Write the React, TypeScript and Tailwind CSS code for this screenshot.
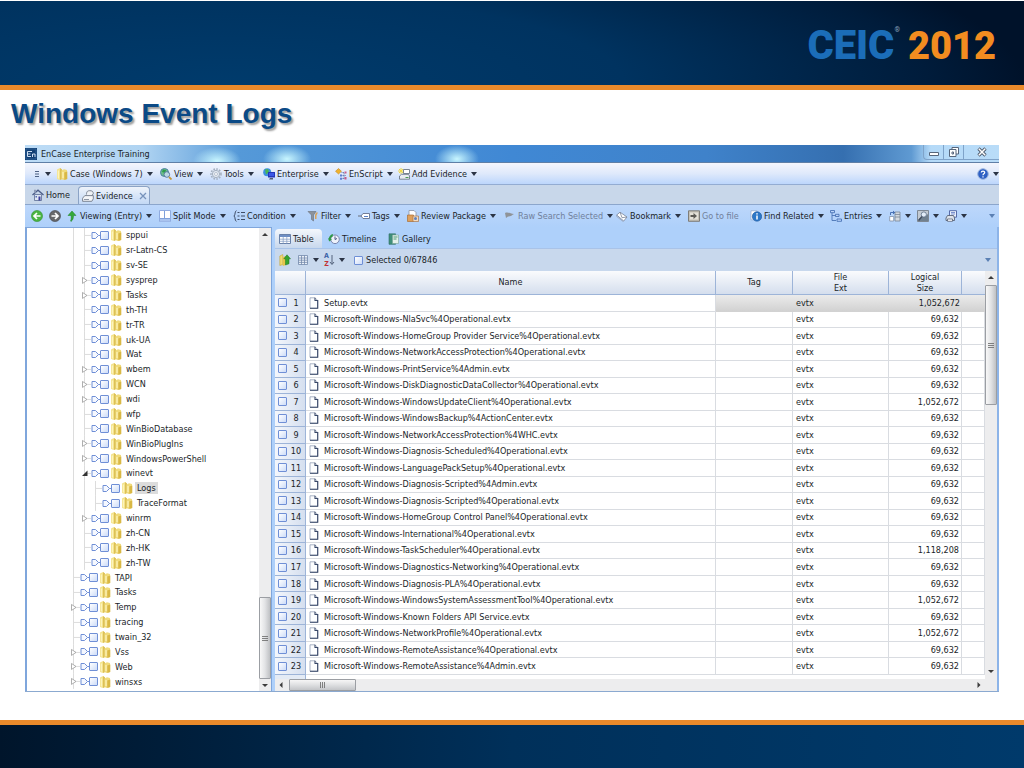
import type { ReactNode } from 'react';

const TREE: { name: string; level: number; mark?: 'closed' | 'open'; selected?: boolean }[] = [
  { name: 'sppui', level: 1 },
  { name: 'sr-Latn-CS', level: 1 },
  { name: 'sv-SE', level: 1 },
  { name: 'sysprep', level: 1, mark: 'closed' },
  { name: 'Tasks', level: 1, mark: 'closed' },
  { name: 'th-TH', level: 1 },
  { name: 'tr-TR', level: 1 },
  { name: 'uk-UA', level: 1 },
  { name: 'Wat', level: 1 },
  { name: 'wbem', level: 1, mark: 'closed' },
  { name: 'WCN', level: 1, mark: 'closed' },
  { name: 'wdi', level: 1, mark: 'closed' },
  { name: 'wfp', level: 1 },
  { name: 'WinBioDatabase', level: 1 },
  { name: 'WinBioPlugIns', level: 1, mark: 'closed' },
  { name: 'WindowsPowerShell', level: 1, mark: 'closed' },
  { name: 'winevt', level: 1, mark: 'open' },
  { name: 'Logs', level: 2, selected: true },
  { name: 'TraceFormat', level: 2 },
  { name: 'winrm', level: 1, mark: 'closed' },
  { name: 'zh-CN', level: 1 },
  { name: 'zh-HK', level: 1 },
  { name: 'zh-TW', level: 1 },
  { name: 'TAPI', level: 0 },
  { name: 'Tasks', level: 0 },
  { name: 'Temp', level: 0, mark: 'closed' },
  { name: 'tracing', level: 0 },
  { name: 'twain_32', level: 0 },
  { name: 'Vss', level: 0, mark: 'closed' },
  { name: 'Web', level: 0, mark: 'closed' },
  { name: 'winsxs', level: 0, mark: 'closed' },
];

const FILES: [string, string][] = [
  ['Setup.evtx', '1,052,672'],
  ['Microsoft-Windows-NlaSvc%4Operational.evtx', '69,632'],
  ['Microsoft-Windows-HomeGroup Provider Service%4Operational.evtx', '69,632'],
  ['Microsoft-Windows-NetworkAccessProtection%4Operational.evtx', '69,632'],
  ['Microsoft-Windows-PrintService%4Admin.evtx', '69,632'],
  ['Microsoft-Windows-DiskDiagnosticDataCollector%4Operational.evtx', '69,632'],
  ['Microsoft-Windows-WindowsUpdateClient%4Operational.evtx', '1,052,672'],
  ['Microsoft-Windows-WindowsBackup%4ActionCenter.evtx', '69,632'],
  ['Microsoft-Windows-NetworkAccessProtection%4WHC.evtx', '69,632'],
  ['Microsoft-Windows-Diagnosis-Scheduled%4Operational.evtx', '69,632'],
  ['Microsoft-Windows-LanguagePackSetup%4Operational.evtx', '69,632'],
  ['Microsoft-Windows-Diagnosis-Scripted%4Admin.evtx', '69,632'],
  ['Microsoft-Windows-Diagnosis-Scripted%4Operational.evtx', '69,632'],
  ['Microsoft-Windows-HomeGroup Control Panel%4Operational.evtx', '69,632'],
  ['Microsoft-Windows-International%4Operational.evtx', '69,632'],
  ['Microsoft-Windows-TaskScheduler%4Operational.evtx', '1,118,208'],
  ['Microsoft-Windows-Diagnostics-Networking%4Operational.evtx', '69,632'],
  ['Microsoft-Windows-Diagnosis-PLA%4Operational.evtx', '69,632'],
  ['Microsoft-Windows-WindowsSystemAssessmentTool%4Operational.evtx', '1,052,672'],
  ['Microsoft-Windows-Known Folders API Service.evtx', '69,632'],
  ['Microsoft-Windows-NetworkProfile%4Operational.evtx', '1,052,672'],
  ['Microsoft-Windows-RemoteAssistance%4Operational.evtx', '69,632'],
  ['Microsoft-Windows-RemoteAssistance%4Admin.evtx', '69,632'],
];

function Icon({ children }: { children: ReactNode }) {
  return (
    <svg viewBox="0 0 12 12" className="h-3 w-3 shrink-0" fill="none" aria-hidden="true">
      {children}
    </svg>
  );
}

const FolderIcon = () => (
  <Icon>
    <path d="M1 1.500 4 0 6 1.500V11L4 12 1 11z" fill="#f4e38c" />
    <path d="M4 0 6 1.500V11L4 12z" fill="#dcc057" />
    <path d="M5.500 2.500 8 1.200 11 2v9L7.500 12 5.500 11z" fill="#f0db7c" />
    <path d="M8.300 4.500 11.300 3.500v7.500l-3 1z" fill="#d9b845" />
    <path d="M2.300 2.500v8M7 4v6" stroke="#fff8c8" />
  </Icon>
);
const GlobeSearch = () => (
  <Icon>
    <circle cx="4.500" cy="4.500" r="4" fill="#6cbf8a" stroke="#4f7fa6" />
    <path d="M3 1.500 6 2 5 5 2 4z" fill="#2f9c4c" />
    <circle cx="6.800" cy="6.500" r="2.800" fill="#cfe4f5" fillOpacity=".8" stroke="#56799c" />
    <path d="m9 9 2.500 2.500" stroke="#c79a3b" strokeWidth="1.800" />
  </Icon>
);
const GearIcon = () => (
  <Icon>
    <circle cx="6" cy="6" r="5" stroke="#a3afbe" strokeWidth="1.600" strokeDasharray="1.6 1.3" />
    <circle cx="6" cy="6" r="3.600" fill="#e3eaf3" stroke="#a3afbe" />
    <circle cx="6" cy="6" r="1.500" fill="#fff" stroke="#a3afbe" strokeWidth=".7" />
  </Icon>
);
const EnterpriseIcon = () => (
  <Icon>
    <circle cx="4.200" cy="4.200" r="4" fill="#3d8fe0" />
    <path d="M2 1.500 5 1l1 3-3 2.500z" fill="#4ab555" />
    <path d="M5 4h7v5.500H5z" fill="#2436b8" />
    <path d="M6 5h5v3H6z" fill="#3b57e6" />
    <path d="M7 10h3v1.500H6z" fill="#525c78" />
  </Icon>
);
const ScriptIcon = () => (
  <Icon>
    <path d="m3.500.5 3 2.800-3 2.700-3-2.700z" fill="#f0b22c" stroke="#b97a16" strokeWidth=".5" />
    <path d="M6.500 4.500h2.500v6M6.500 7.500H11M6.500 10.500H11" stroke="#6d7fae" strokeDasharray="1 .6" />
    <path d="M9.500 3.500h2v2h-2zM9.500 9h2v2.500h-2z" fill="#c65d8a" />
    <path d="M5 6.500h2v2H5zM5 9.800h2v2H5z" fill="#5f7fd0" />
  </Icon>
);
const AddEvidenceIcon = () => (
  <Icon>
    <path d="M3 0v6M0 3h6M1 1l4 4M5 1 1 5" stroke="#f0d844" />
    <path d="M5.500 1.500h6v4h-6z" fill="#fff" stroke="#6c7888" strokeWidth=".9" />
    <path d="m1.500 8 2-1.700h7l1 1.700v3.200h-10z" fill="#e8ecf1" stroke="#6c7888" strokeWidth=".9" />
    <path d="M7.500 9.500h3" stroke="#4a9a52" />
  </Icon>
);
const HomeIcon = () => (
  <Icon>
    <path d="M2.500 5.500h7v6h-7z" fill="#dfe6f3" stroke="#5b6c94" strokeWidth=".8" />
    <path d="M.5 6 6 1.200 11.500 6" stroke="#4c5d88" strokeWidth="1.300" />
    <path d="M2 .8h2v3H2z" fill="#8f9cb8" />
    <path d="M6.500 7.500h2v4h-2z" fill="#3c3f9c" />
    <path d="M3.500 7h1.500v1.500H3.500z" fill="#576fb4" />
  </Icon>
);
const DriveIcon = () => (
  <Icon>
    <path d="M4.500 4.500C4.500 1 6 .7 8 .7s3.300.8 3.300 3L9.500 6" fill="#eef1f5" stroke="#707988" strokeWidth=".9" />
    <path d="m.6 8.200 2.200-2.600h8.500v3.200l-1.500 2.500H.6z" fill="#f3f5f8" stroke="#707988" strokeWidth=".9" />
    <path d="M2 9.500h5" stroke="#8d96a5" />
  </Icon>
);
const BackIcon = () => (
  <Icon>
    <circle cx="6" cy="6" r="5.500" fill="#4cb543" stroke="#2f8f2c" strokeWidth=".6" />
    <path d="M9.500 6H3.500M6 3 3 6l3 3" stroke="#fff" strokeWidth="1.700" />
  </Icon>
);
const ForwardIcon = () => (
  <Icon>
    <circle cx="6" cy="6" r="5.500" fill="#67686b" stroke="#3f4043" strokeWidth=".6" />
    <path d="M2.500 6h6M6 3l3 3-3 3" stroke="#fff" strokeWidth="1.700" />
  </Icon>
);
const UpIcon = () => (
  <Icon>
    <path d="M6 1 10 5.500H7.500C7.500 8 7 10 5 11.500L4.500 11c.8-1.500.8-3.500.6-5.500H2z" fill="#35a93a" stroke="#1d7f25" strokeWidth=".5" />
  </Icon>
);
const SplitIcon = () => (
  <Icon>
    <path d="M.5.5h11v11H.5z" fill="#fff" stroke="#8fabe0" />
    <path d="M5.500 1v7M1 8.500h10" stroke="#7fa0da" />
    <path d="M1 9h10v2.500H1z" fill="#a9c3ee" />
  </Icon>
);
const ConditionIcon = () => (
  <Icon>
    <path d="M3.500.7C1.700.7 2.500 5 1 6c1.500 1 .7 5.300 2.500 5.300" stroke="#3e4c66" />
    <path d="M4.500 2.500h2M4.500 6h2M4.500 9.500h2M8 2.500h4M8 6h4M8 9.500h4" stroke="#3e4c66" strokeWidth="1.200" />
  </Icon>
);
const FilterIcon = () => (
  <Icon>
    <path d="M1 1.500h8L6.500 5v6L4.500 9.500V5z" fill="#8c939c" stroke="#686f79" strokeWidth=".6" />
    <path d="M9 2.500h2L9.500 5.500V9H8V5z" fill="#d8a45c" />
  </Icon>
);
const TagIcon = () => (
  <Icon>
    <path d="M0 6h3" stroke="#6a6f7a" />
    <path d="m3 6 2-2.500h6.500v5H5z" fill="#fff" stroke="#65728c" strokeWidth=".9" />
    <path d="M6 6.500h4" stroke="#5a82c8" />
  </Icon>
);
const ReviewIcon = () => (
  <Icon>
    <path d="M2 .5h5l2 2V8H2z" fill="#fff" stroke="#8c93a2" strokeWidth=".8" />
    <path d="M.5 5h6v6.500h-6z" fill="#dfa05b" stroke="#a96e33" strokeWidth=".7" />
    <path d="M6 6h5.500v5.500H6z" fill="#f3dcc0" stroke="#a9764a" strokeWidth=".7" />
    <circle cx="8.500" cy="8.500" r="1.500" fill="#5f82be" />
  </Icon>
);
const FlagIcon = () => (
  <Icon>
    <path d="M1 3c3-1.500 5 .8 9 1-2 1-3 2.500-6 2.500L2 8z" fill="#8f9398" />
  </Icon>
);
const BookmarkIcon = () => (
  <Icon>
    <path d="M.7 5 4 2.200l7 4.800-3.300 4z" fill="#fff" stroke="#7a8498" strokeWidth=".8" />
    <path d="m4 2.200 2 5.500 5-.7" stroke="#7a8498" strokeWidth=".8" />
    <path d="M.7 5v1.500L7.500 11.800" stroke="#98a2b6" strokeWidth=".8" />
  </Icon>
);
const GoToIcon = () => (
  <Icon>
    <path d="M.5.8h11v10.500H.5z" fill="#c4c0b6" stroke="#77746e" strokeWidth=".9" />
    <path d="M2 2.500h8v7H2z" fill="#e4e1d8" />
    <path d="M2.500 6H6" stroke="#5c5a55" strokeWidth="2" />
    <path d="M5.500 3 9 6 5.500 9z" fill="#5c5a55" />
  </Icon>
);
const InfoIcon = () => (
  <Icon>
    <path d="M1 .8h6v9H1z" fill="#fff" stroke="#8fa7c8" strokeWidth=".7" />
    <circle cx="7" cy="6.500" r="4.700" fill="#2c78c8" stroke="#1a559c" strokeWidth=".6" />
    <path d="M7 5.500v4M7 3.300v1.300" stroke="#fff" strokeWidth="1.500" />
  </Icon>
);
const EntriesIcon = () => (
  <Icon>
    <path d="M2 2v8.500h4M2 5.500h4" stroke="#4b74b4" strokeWidth=".9" />
    <path d="M.5.5h4v2.200h-4zM5.500 4.300H9v2.200H5.500zM7 9h4.500v2.300H7z" fill="#b9d3f8" stroke="#3d68ad" strokeWidth=".8" />
  </Icon>
);
const DatabaseIcon = () => (
  <Icon>
    <path d="M6 2h5v9H6z" fill="#d3d9e1" stroke="#7a8594" strokeWidth=".8" />
    <path d="M6 4.500h5M6 7h5" stroke="#7a8594" strokeWidth=".8" />
    <path d="M1.500 5V2.500h4M4 1l1.700 1.500L4 4" stroke="#3b65ad" strokeWidth=".9" />
    <path d="M.7 6.500h4v4.500h-4z" fill="#fff" stroke="#8390a6" strokeWidth=".8" />
  </Icon>
);
const PhotoIcon = () => (
  <Icon>
    <path d="M.5.500h11v11H.5z" fill="#c3cad2" stroke="#7d8793" />
    <path d="M1 11C3 6 6 8 11 4v7z" fill="#70808f" />
    <circle cx="6.800" cy="4.500" r="2.600" fill="#e2ecf7" stroke="#5d6f87" strokeWidth=".8" />
    <path d="m5 6.500-3.500 4" stroke="#3e4a5c" strokeWidth="1.300" />
  </Icon>
);
const PrinterIcon = () => (
  <Icon>
    <path d="M4.500.7h7v6.500h-7z" fill="#eaf0fb" stroke="#4a5fa0" strokeWidth=".9" />
    <path d="M6 2.500h4M6 4h4" stroke="#5f7ac4" strokeWidth=".8" />
    <path d="m1 8 1.500-2.500h6L9.500 8v2.500H1z" fill="#dde2ea" stroke="#576277" strokeWidth=".9" />
    <path d="M2.500 9h5v2.300h-5z" fill="#fff" stroke="#576277" strokeWidth=".8" />
  </Icon>
);
const TableIcon = () => (
  <Icon>
    <path d="M.5 1.500h11v9H.5z" fill="#fff" stroke="#59749f" strokeWidth=".9" />
    <path d="M1 2h10v2H1z" fill="#6f8fc4" />
    <path d="M4.200 4v6.500M7.800 4v6.500M1 6.200h10M1 8.300h10" stroke="#8ba2c6" strokeWidth=".8" />
  </Icon>
);
const TimelineIcon = () => (
  <Icon>
    <circle cx="7" cy="6.300" r="4.300" fill="#eef2fb" stroke="#7b86ae" />
    <path d="M7 3.500v3l2-1" stroke="#3a4675" strokeWidth=".9" />
    <path d="M.7 5.500C1.500 3 2.700 1.500 5 1L4.600 3.500c-1.200.6-1.600 1.400-1.900 2.500L4 6.500 1.200 8.500 0 5.200z" fill="#2f9a48" />
  </Icon>
);
const GalleryIcon = () => (
  <Icon>
    <path d="M1 .8h6.500v10.500H1z" fill="#3f8f7a" stroke="#2e6b63" strokeWidth=".6" />
    <path d="M4.500 2h6v8.500h-6z" fill="#e4f1ea" stroke="#7ba597" strokeWidth=".6" />
    <path d="M5.500 4h4M5.500 6h3" stroke="#4d9a78" />
  </Icon>
);
const FolderUpIcon = () => (
  <Icon>
    <path d="m.8 2 3-1.500v10L.8 11.500z" fill="#f1da6c" stroke="#bc9a2d" strokeWidth=".5" />
    <path d="m3.800 3 3-1v9l-3 1z" fill="#e5c54b" />
    <path d="m8 .8 3.500 4H10v5L6.500 11V4.800H4.800z" fill="#35a32f" stroke="#1c761d" strokeWidth=".5" />
  </Icon>
);
const GridIcon = () => (
  <Icon>
    <path d="M1.500 1.500h9v9h-9z" fill="#eaf0f8" stroke="#7489ab" strokeWidth=".8" />
    <path d="M4.500 1.500v9M7.500 1.500v9M1.500 4h9M1.500 6.200h9M1.500 8.400h9" stroke="#7489ab" strokeWidth=".8" />
  </Icon>
);
const HelpIcon = () => (
  <Icon>
    <circle cx="6" cy="6" r="5.300" fill="#2f61c4" stroke="#9db6de" />
    <path d="M4.300 4.600c0-2 3.400-2 3.400 0 0 1.300-1.700 1.200-1.700 2.600M6 8.300v1.300" stroke="#fff" strokeWidth="1.200" />
  </Icon>
);
const PageIcon = () => (
  <Icon>
    <path d="M2 .8h5L9.700 3.500v7.800H2z" fill="#fdfeff" stroke="#93a0b8" strokeWidth=".8" />
    <path d="M7 .8v2.700h2.700v7.800H2" stroke="#394868" strokeWidth="1.100" />
  </Icon>
);

function Caret({ pale = false }: { pale?: boolean }) {
  return (
    <svg viewBox="0 0 6 4" className="h-1 w-1.5 shrink-0" aria-hidden="true">
      <path d="M0 0h6L3 4z" fill={pale ? '#5b80b4' : '#2b3445'} />
    </svg>
  );
}

function Tool({ icon, label, name, caret = true, muted = false }: { icon?: ReactNode; label?: string; name?: string; caret?: boolean; muted?: boolean }) {
  return (
    <button type="button" aria-label={label ? undefined : name} className={`flex items-center gap-1 whitespace-nowrap ${muted ? 'text-[#71809a]' : ''}`}>
      <span className="flex items-center gap-0.5">
        {icon}
        {label}
      </span>
      {caret && <Caret />}
    </button>
  );
}

function Check({ name }: { name: string }) {
  return (
    <input
      type="checkbox"
      aria-label={name}
      className="block h-[9px] w-[9px] shrink-0 appearance-none rounded-[1px] border border-[#6f8fd6] bg-linear-to-br from-white to-[#cddcf8] checked:bg-[#6485d0]"
    />
  );
}

function ArrowButton({ dir, name }: { dir: 'up' | 'down' | 'left' | 'right'; name: string }) {
  const shape = { up: 'M0 5 3 2l3 3z', down: 'M0 2h6L3 5z', left: 'M4.500 0v6L1.500 3z', right: 'M1.500 0v6l3-3z' }[dir];
  return (
    <button type="button" aria-label={name} className="flex h-3 w-3 shrink-0 items-center justify-center">
      <svg viewBox="0 0 6 6" className="h-1.5 w-1.5" aria-hidden="true">
        <path d={shape} fill="#3c3c3c" />
      </svg>
    </button>
  );
}

function Logo() {
  return (
    <div className="flex items-center gap-2 font-[Roboto,sans-serif] text-[40px] leading-none font-black" aria-label="CEIC 2012">
      <span className="flex text-[#1b6db8]">
        CEIC<sup className="mt-1 text-[7px] leading-none font-normal text-[#8aa0ba]">®</sup>
      </span>
      <span className="text-[38px] text-[#f28c20]">2012</span>
    </div>
  );
}

function TitleBar() {
  return (
    <div className="flex h-[18px] shrink-0 items-center border-b border-[#5f7fa6] bg-[radial-gradient(ellipse_24px_14px_at_192px_16px,#c8f6ff,transparent),radial-gradient(ellipse_24px_14px_at_262px_14px,#c8f6ff,transparent),radial-gradient(ellipse_22px_14px_at_432px_14px,#c8f6ff,transparent),linear-gradient(90deg,#bddcf6,#b0d4f2_12%,#5599d8_22%,#4088d4_50%,#3f82ca_70%,#356fb0_84%,#5f9ad2_91%,#b5daf8_93%,#b9dcf8)]">
      <svg viewBox="0 0 12 12" className="h-3 w-3 shrink-0" aria-hidden="true">
        <path d="M0 0h12v12H0z" fill="#123f73" />
        <path d="M1 1h10v10H1z" fill="none" stroke="#3f74ad" strokeWidth=".6" />
        <path d="M2.500 3.500h4.500M2.500 3.500v5h3.500M2.500 6h3M7.500 9V6h2.500v3" stroke="#e4f1ff" strokeWidth=".9" fill="none" />
      </svg>
      <span className="ml-1">EnCase Enterprise Training</span>
      <div className="ml-auto flex h-full pb-0.5">
        <button type="button" aria-label="Minimize" className="flex w-5 items-center justify-center rounded-bl border-b border-l border-[#7fa3c9]">
          <svg viewBox="0 0 10 10" className="h-2.5 w-2.5" aria-hidden="true"><path d="M.5 5.500h9v3h-9z" fill="#fff" stroke="#58677c" /></svg>
        </button>
        <button type="button" aria-label="Restore" className="flex w-5 items-center justify-center border-b border-l border-[#7fa3c9]">
          <svg viewBox="0 0 10 10" className="h-2.5 w-2.5" aria-hidden="true" fill="#fff" stroke="#58677c"><path d="M3 .5h6.500V7H3z" /><path d="M.5 2.500H7v7H.5z" /><path d="M3 5h1.500v2H3z" /></svg>
        </button>
        <button type="button" aria-label="Close" className="flex w-9 items-center justify-center border-b border-l border-[#7fa3c9]">
          <svg viewBox="0 0 10 10" className="h-2.5 w-2.5" aria-hidden="true"><path d="m1.500 1.500 7 7M8.500 1.500l-7 7" stroke="#4d5a6c" strokeWidth="3.200" /><path d="m1.800 1.800 6.400 6.400M8.200 1.800 1.800 8.200" stroke="#fff" strokeWidth="1.500" /></svg>
        </button>
      </div>
    </div>
  );
}

function MenuBar() {
  return (
    <nav className="grid h-[22px] shrink-0 grid-cols-[23px_104px_50px_53px_72px_63px_90px_1fr] items-center border-b border-[#93acd2] bg-linear-to-b from-[#f4f6fd] via-[#dfe9fb] to-[#bcd6fc] pl-2">
      <Tool
        name="Main menu"
        icon={
          <svg viewBox="0 0 8 8" className="h-2 w-2" aria-hidden="true"><path d="M2 1.500h4M2 4h4M2 6.500h4" stroke="#4d6184" /></svg>
        }
      />
      <Tool icon={<FolderIcon />} label="Case (Windows 7)" />
      <Tool icon={<GlobeSearch />} label="View" />
      <Tool icon={<GearIcon />} label="Tools" />
      <Tool icon={<EnterpriseIcon />} label="Enterprise" />
      <Tool icon={<ScriptIcon />} label="EnScript" />
      <Tool icon={<AddEvidenceIcon />} label="Add Evidence" />
      <div className="flex justify-end"><Tool icon={<HelpIcon />} name="Help" /></div>
    </nav>
  );
}

function DocumentTabs() {
  return (
    <div className="flex h-5 shrink-0 items-end border-b border-[#8ca6cc] bg-[#c8d7ea] pl-[7px]" role="tablist">
      <button type="button" role="tab" aria-selected="false" className="flex h-[18px] w-[46px] items-center gap-0.5"><HomeIcon />Home</button>
      <div className="flex h-[18px] w-[72px] items-center rounded-t-sm border border-b-0 border-[#8ba3c6] bg-linear-to-b from-[#eef3fa] to-[#c3d8f5] pl-[3px]">
        <button type="button" role="tab" aria-selected="true" className="flex items-center gap-0.5"><DriveIcon />Evidence</button>
        <button type="button" aria-label="Close tab" className="ml-auto pr-0.5">
          <svg viewBox="0 0 8 8" className="h-2 w-2" aria-hidden="true"><path d="m1 1 6 6M7 1 1 7" stroke="#7792bb" strokeWidth="1.300" /></svg>
        </button>
      </div>
    </div>
  );
}

function ToolBar() {
  return (
    <div className="grid h-[22px] shrink-0 grid-cols-[18px_17px_93px_74px_74px_51px_49px_97px_112px_72px_62px_80px_59px_28px_28px_28px_1fr] items-center bg-linear-to-b from-[#bdd7fb] to-[#aed0fa] pl-1.5">
      <Tool icon={<BackIcon />} name="Back" caret={false} />
      <Tool icon={<ForwardIcon />} name="Forward" caret={false} />
      <Tool icon={<UpIcon />} label="Viewing (Entry)" />
      <Tool icon={<SplitIcon />} label="Split Mode" />
      <Tool icon={<ConditionIcon />} label="Condition" />
      <Tool icon={<FilterIcon />} label="Filter" />
      <Tool icon={<TagIcon />} label="Tags" />
      <Tool icon={<ReviewIcon />} label="Review Package" />
      <Tool icon={<FlagIcon />} label="Raw Search Selected" muted />
      <Tool icon={<BookmarkIcon />} label="Bookmark" />
      <Tool icon={<GoToIcon />} label="Go to file" caret={false} muted />
      <Tool icon={<InfoIcon />} label="Find Related" />
      <Tool icon={<EntriesIcon />} label="Entries" />
      <Tool icon={<DatabaseIcon />} name="Evidence data" />
      <Tool icon={<PhotoIcon />} name="Acquire" />
      <Tool icon={<PrinterIcon />} name="Print" />
      <button type="button" aria-label="More tools" className="mr-1 justify-self-end"><Caret pale /></button>
    </div>
  );
}

const INDENT = ['pl-[44px]', 'pl-[55px]', 'pl-[66px]'];

function TreeRow({ item }: { item: (typeof TREE)[number] }) {
  return (
    <li role="treeitem" aria-selected={!!item.selected} aria-level={item.level + 1} className={`flex min-h-0 flex-1 items-center ${INDENT[item.level]}`}>
      {item.level > 0 && (
        <span className={`flex self-stretch ${item.level === 2 ? '-ml-[20px] w-[20px]' : '-ml-[9px] w-[9px]'}`}>
          <span className="w-[11px] border-l border-[#dcdcdc]" />
          {item.level === 2 && <span className="w-[9px] border-l border-[#dcdcdc]" />}
        </span>
      )}
      <span className="flex w-[9px] shrink-0 items-center self-stretch">
        <svg viewBox="0 0 9 15" preserveAspectRatio="none" className="h-full w-full" aria-hidden="true">
          <path d="M2.500 0v15M2.500 7.500H9" stroke="#dcdcdc" strokeWidth="1" />
          {item.mark === 'closed' && <path d="M.5 4.500v6L5 7.500z" fill="#fff" stroke="#9a9a9a" strokeWidth=".8" />}
          {item.mark === 'open' && <path d="M5.500 4.500v5.500H0z" fill="#333" />}
        </svg>
      </span>
      <svg viewBox="0 0 9 9" className="h-[9px] w-[9px] shrink-0" aria-hidden="true">
        <path d="M1 1.500h3.500L7.500 4.500 4.500 7.500H1z" fill="#f5f8ff" stroke="#6f8fd6" />
        <path d="M7.500 4.500H9" stroke="#6f8fd6" />
      </svg>
      <Check name={item.name} />
      <span className="ml-px flex shrink-0"><FolderIcon /></span>
      <span className={`ml-0.5 px-0.5 ${item.selected ? 'bg-[#dcdcdc]' : ''}`}>{item.name}</span>
    </li>
  );
}

function VerticalScroll({ above, name }: { above: boolean; name: string }) {
  return (
    <div className="flex w-3 shrink-0 flex-col bg-[#ededee]">
      <ArrowButton dir="up" name={`${name} up`} />
      {above && <div className="grow-[354] basis-0" />}
      <div className={`flex ${above ? 'grow-[79]' : 'mt-0.5 grow-[118]'} basis-0 items-center justify-center rounded-[1px] border border-[#9b9ea3] bg-linear-to-r from-[#f8f8f8] via-[#e2e3e5] to-[#bfc1c4]`}>
        <svg viewBox="0 0 6 7" className="h-[7px] w-1.5" aria-hidden="true"><path d="M0 1.500h6M0 3.500h6M0 5.500h6" stroke="#666" strokeWidth=".8" /></svg>
      </div>
      {!above && <div className="grow-[260] basis-0" />}
      <ArrowButton dir="down" name={`${name} down`} />
    </div>
  );
}

function EvidenceTable() {
  const head = 'border-r border-b border-[#9db4d8] p-0 align-middle font-normal leading-[11px]';
  return (
    <table className="h-full w-full table-fixed border-separate border-spacing-0 bg-white">
      <colgroup>
        <col className="w-[31px]" />
        <col />
        <col className="w-[77px]" />
        <col className="w-[96px]" />
        <col className="w-[73px]" />
        <col className="w-[23px]" />
      </colgroup>
      <thead>
        <tr className="h-6 bg-linear-to-b from-[#fafbfd] to-[#d3dded]">
          <th className={head} aria-label="Row" />
          <th className={head}>Name</th>
          <th className={head}>Tag</th>
          <th className={head}>File<br />Ext</th>
          <th className={head}>Logical<br />Size</th>
          <th className="border-b border-[#9db4d8] p-0" aria-label="More columns" />
        </tr>
      </thead>
      <tbody>
        {FILES.map(([name, size], i) => {
          const cell = `border-b p-0 ${i === 0 ? 'border-[#d2d2d2] bg-linear-to-b from-[#ebebeb] to-[#d2d2d2]' : 'border-r border-[#d9dce1]'}`;
          return (
            <tr key={name}>
              <td className="border-r border-b border-[#9db4d8] bg-linear-to-r from-[#f4f7fc] to-[#d5dfef] p-0">
                <div className="flex items-center pl-[3px]">
                  <Check name={`Select row ${i + 1}`} />
                  <span className="grow text-center">{i + 1}</span>
                </div>
              </td>
              <td className="border-r border-b border-[#d9dce1] p-0">
                <div className="flex items-center gap-1 pl-0.5"><PageIcon />{name}</div>
              </td>
              <td className={cell} />
              <td className={cell}><span className="pl-[3px]">evtx</span></td>
              <td className={`${cell} text-right`}><span className="pr-0.5">{size}</span></td>
              <td className={cell} />
            </tr>
          );
        })}
      </tbody>
    </table>
  );
}

function TablePane() {
  return (
    <section className="flex min-w-0 grow flex-col border-r-2 border-[#8db4e8]">
      <div className="flex h-[21px] shrink-0 items-end bg-[#aed0fa]" role="tablist">
        <button type="button" role="tab" aria-selected="true" className="flex h-[19px] w-[47px] items-center gap-0.5 rounded-t-sm bg-linear-to-b from-[#f4f7fc] to-[#c8d8ed] pl-1"><TableIcon />Table</button>
        <button type="button" role="tab" aria-selected="false" className="ml-1.5 flex h-[19px] w-[58px] items-center gap-0.5"><TimelineIcon />Timeline</button>
        <button type="button" role="tab" aria-selected="false" className="ml-0.5 flex h-[19px] items-center gap-0.5"><GalleryIcon />Gallery</button>
      </div>
      <div className="flex h-[23px] shrink-0 items-center border-t border-[#a9c3e8] bg-[#c8d8ed] pl-1">
        <div className="grid grid-cols-[18px_27px_30px] items-center">
          <Tool icon={<FolderUpIcon />} name="Up one folder" caret={false} />
          <Tool icon={<GridIcon />} name="Columns" />
          <Tool
            name="Sort"
            icon={
              <span className="flex items-center">
                <span className="flex flex-col text-[7px] leading-[8px] font-bold"><span className="text-[#3c62a8]">A</span><span className="text-[#c22f35]">Z</span></span>
                <svg viewBox="0 0 6 12" className="h-3 w-1.5" aria-hidden="true"><path d="M3 1v9M1 8l2 2.500L5 8" fill="none" stroke="#55637c" /></svg>
              </span>
            }
          />
        </div>
        <label className="flex items-center gap-[3px]"><Check name="Select all" />Selected 0/67846</label>
        <button type="button" aria-label="More table tools" className="ml-auto pr-1.5"><Caret pale /></button>
      </div>
      <div className="flex min-h-0 grow bg-[#ededee]">
        <div className="flex min-w-0 grow flex-col">
          <div className="min-h-0 grow"><EvidenceTable /></div>
          <div className="h-1 shrink-0 bg-white"><div className="h-full w-[31px] border-r border-[#9db4d8] bg-[#e4ebf5]" /></div>
          <div className="flex h-3 shrink-0">
            <ArrowButton dir="left" name="Scroll left" />
            <div className="ml-0.5 flex w-[67px] items-center justify-center rounded-[1px] border border-[#9b9ea3] bg-linear-to-b from-[#f6f6f6] via-[#dedfe1] to-[#c3c5c8]">
              <svg viewBox="0 0 7 6" className="h-1.5 w-[7px]" aria-hidden="true"><path d="M1.500 0v6M3.500 0v6M5.500 0v6" stroke="#666" strokeWidth=".8" /></svg>
            </div>
            <div className="ml-auto"><ArrowButton dir="right" name="Scroll right" /></div>
          </div>
        </div>
        <div className="flex pb-3.5"><VerticalScroll above={false} name="Scroll table" /></div>
      </div>
    </section>
  );
}

export default function App() {
  return (
    <div className="flex h-screen min-h-[768px] flex-col bg-white font-['DejaVu_Sans_Condensed','Open_Sans',sans-serif] text-[9px] leading-3 text-[#1a1e28]">
      <header className="mt-px flex h-[89px] shrink-0 items-center justify-end border-b-[5px] border-[#ea8a2b] bg-[radial-gradient(ellipse_78%_220%_at_22%_100%,#003b6c_0%,#003360_50%,#001c3b_88%,#00122a_100%)] pt-1.5 pr-7">
        <Logo />
      </header>
      <h1 className="mt-1.5 ml-[11px] shrink-0 font-['Liberation_Sans',sans-serif] text-[28px] leading-9 font-bold text-[#0b4a86] [text-shadow:2px_2px_2px_#9a9a9a]">Windows Event Logs</h1>
      <main className="mt-[13px] mr-[25px] ml-[25px] flex min-h-0 grow flex-col border-b border-[#8ba9d0]">
        <TitleBar />
        <MenuBar />
        <DocumentTabs />
        <ToolBar />
        <div className="flex min-h-0 grow border-l-2 border-[#7fa6dc]">
          <aside className="flex w-[244px] shrink-0 border-t border-[#7fa6dc] bg-white">
            <div className="flex min-w-0 grow">
              <ul role="tree" aria-label="Folders" className="flex grow flex-col pb-0.5">
                {TREE.map((item, i) => <TreeRow key={i} item={item} />)}
              </ul>
            </div>
            <VerticalScroll above name="Scroll folders" />
          </aside>
          <div className="w-1 shrink-0 border-l border-[#7fa6dc] bg-[#aed0fa]" />
          <TablePane />
        </div>
      </main>
      <footer className="mt-7 h-[48px] shrink-0 border-t-[5px] border-[#ea8a2b] bg-linear-to-r from-[#00152b] via-[#00305a] to-[#003a6b]" />
    </div>
  );
}
